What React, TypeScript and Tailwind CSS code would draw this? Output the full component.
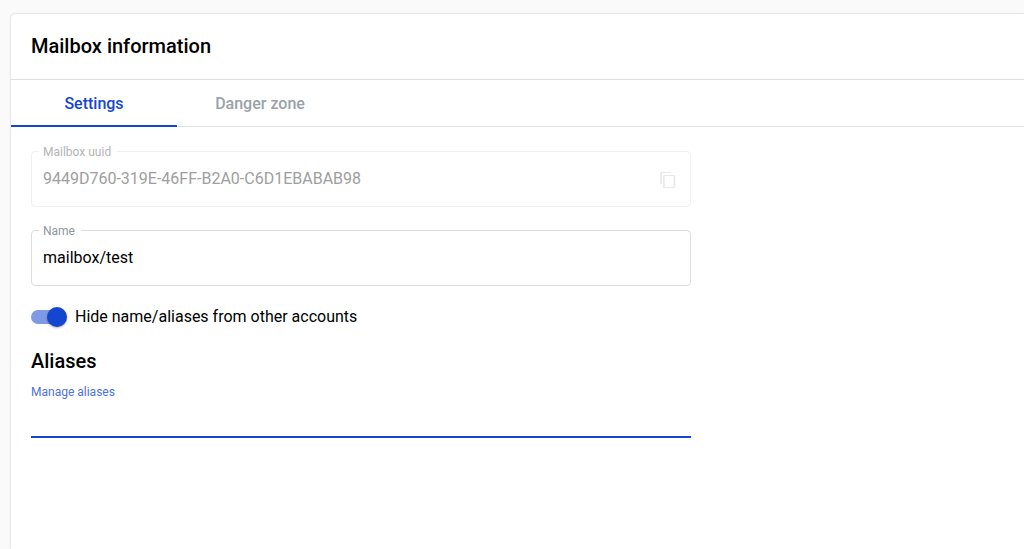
import { useState } from "react";
import type { ReactNode } from "react";

type Tab = "settings" | "danger";

const tabs: { id: Tab; label: string }[] = [
  { id: "settings", label: "Settings" },
  { id: "danger", label: "Danger zone" },
];

function CopyIcon() {
  return (
    <svg width="18" height="18" viewBox="0 0 18 18" fill="currentColor" aria-hidden="true">
      <path d="M12 1H2.5Q1.2 1 1.2 2.3V13H2.8V2H12Z" />
      <path
        fillRule="evenodd"
        d="M5.3 4H15Q16.2 4 16.2 5.2V15.8Q16.2 17 15 17H5.3Q4.1 17 4.1 15.8V5.2Q4.1 4 5.3 4ZM5.7 5V16H14.6V5Z"
      />
    </svg>
  );
}

type OutlinedFieldProps = {
  id: string;
  label: string;
  value: string;
  disabled?: boolean;
  onChange?: (value: string) => void;
  action?: ReactNode;
};

function OutlinedField({ id, label, value, disabled, onChange, action }: OutlinedFieldProps) {
  return (
    <fieldset
      className={`min-w-0 rounded border px-[7px] pb-[7px] ${disabled ? "border-[#f0f0f0]" : "border-[#dcdddf]"}`}
    >
      <legend className={`pt-0.5 pr-1.5 pl-1 text-xs leading-4 ${disabled ? "text-[#b4b4b4]" : "text-[#8f979e]"}`}>
        <label htmlFor={id}>{label}</label>
      </legend>
      <div className="flex h-[39px] items-center">
        <input
          id={id}
          type="text"
          value={value}
          disabled={disabled}
          onChange={(event) => onChange?.(event.target.value)}
          className="h-9 min-w-0 flex-1 self-start bg-transparent px-1 text-base outline-none disabled:text-[#9e9e9e]"
        />
        {action}
      </div>
    </fieldset>
  );
}

export default function App() {
  const [tab, setTab] = useState<Tab>("settings");
  const [name, setName] = useState("mailbox/test");
  const [hidden, setHidden] = useState(true);
  const [aliases, setAliases] = useState("");

  return (
    <div className="flex min-h-screen flex-col bg-[#fafafa] pt-3.5 pl-[11px] font-['Roboto',sans-serif] text-black">
      <main className="flex-1 rounded-tl bg-white shadow-[0_0_2px_rgba(0,0,0,0.28)]">
        <header className="border-b border-[#dedfe0] px-5 pt-[18px] pb-[19px]">
          <h1 className="text-xl leading-7 font-medium">Mailbox information</h1>
        </header>

        <div role="tablist" className="flex h-[47px] border-b border-[#dedfe0]">
          {tabs.map(({ id, label }) => (
            <button
              key={id}
              type="button"
              role="tab"
              aria-selected={tab === id}
              onClick={() => setTab(id)}
              className={`-mb-px w-[166px] border-b-2 pt-0.5 text-base font-medium ${
                tab === id ? "border-[#1546cf] text-[#1546cf]" : "border-transparent text-[#9aa2a9]"
              }`}
            >
              {label}
            </button>
          ))}
        </div>

        <form className="flex max-w-[700px] flex-col px-5 pt-[15px]" onSubmit={(event) => event.preventDefault()}>
          <div className="flex flex-col gap-3.5">
            <OutlinedField
              id="uuid"
              label="Mailbox uuid"
              value="9449D760-319E-46FF-B2A0-C6D1EBABAB98"
              disabled
              action={
                <button type="button" aria-label="Copy mailbox uuid" className="mr-1.5 text-[#e6e7e7]">
                  <CopyIcon />
                </button>
              }
            />
            <OutlinedField id="name" label="Name" value={name} onChange={setName} />
          </div>

          <label className="mt-[19px] flex items-center gap-2 self-start text-base leading-6">
            <input
              type="checkbox"
              role="switch"
              checked={hidden}
              onChange={(event) => setHidden(event.target.checked)}
              className="flex h-3.5 w-9 appearance-none items-center rounded-full bg-[#c4c4c4] bg-clip-content pr-0.5 before:size-5 before:shrink-0 before:rounded-full before:bg-white before:shadow-[0_1px_2px_rgba(0,0,0,0.3)] checked:bg-[#8099e4] checked:before:ml-4 checked:before:bg-[#1546cf]"
            />
            Hide name/aliases from other accounts
          </label>

          <h2 className="mt-[18px] text-xl leading-7 font-medium">Aliases</h2>
          <label htmlFor="aliases" className="mt-[7px] text-xs leading-5 text-[#4d72da]">
            Manage aliases
          </label>
          <input
            id="aliases"
            type="text"
            value={aliases}
            onChange={(event) => setAliases(event.target.value)}
            className="h-9 border-b-2 border-[#1546cf] bg-transparent text-base outline-none"
          />
        </form>
      </main>
    </div>
  );
}
